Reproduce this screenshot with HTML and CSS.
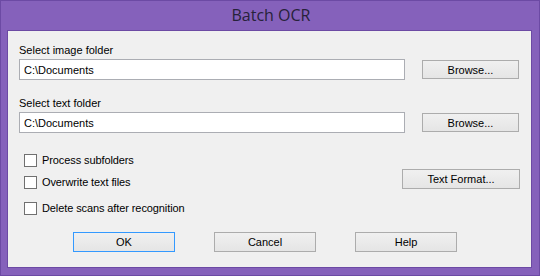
FILE: index.html
```html
<!DOCTYPE html>
<html>
<head>
    <meta charset="UTF-8">
    <title>Batch OCR</title>
    <link rel="stylesheet" href="styles.css">
</head>
<body>
    <div class="window">
        <div class="titlebar">Batch OCR</div>

        <div class="client">
            <div class="field first">
                <div class="field-label">Select image folder</div>
                <div class="field-row">
                    <input class="path" type="text" value="C:\Documents">
                    <button class="btn browse">Browse...</button>
                </div>
            </div>

            <div class="field">
                <div class="field-label">Select text folder</div>
                <div class="field-row">
                    <input class="path" type="text" value="C:\Documents">
                    <button class="btn browse">Browse...</button>
                </div>
            </div>

            <div class="options">
                <div class="checks">
                    <label class="check"><input type="checkbox"> Process subfolders</label>
                    <label class="check second"><input type="checkbox"> Overwrite text files</label>
                    <label class="check third"><input type="checkbox"> Delete scans after recognition</label>
                </div>
                <button class="btn format">Text Format...</button>
            </div>

            <div class="actions">
                <button class="btn action default">OK</button>
                <button class="btn action">Cancel</button>
                <button class="btn action">Help</button>
            </div>
        </div>
    </div>
</body>
</html>
```

FILE: styles.css
```css
html, body {
    margin: 0;
    padding: 0;
    width: 540px;
    height: 276px;
    overflow: hidden;
}
.window {
    box-sizing: border-box;
    width: 540px;
    height: 276px;
    background: #8561bb;
    border: 1px solid #6c4aa4;
    display: flex;
    flex-direction: column;
}
.titlebar {
    height: 29px;
    line-height: 29px;
    text-align: center;
    font-family: "Open Sans", "Noto Sans", sans-serif;
    font-size: 16px;
    color: #27223a;
    padding-left: 2px;
}
.client {
    box-sizing: border-box;
    margin: 0 7px 0 6px;
    height: 238px;
    background: #f0f0f0;
    border: 1px solid #6c4aa4;
    padding: 13px 11px 0 11px;
    font-family: "Liberation Sans", Arial, sans-serif;
    font-size: 11px;
    color: #000;
}
.field {
    margin-top: 17px;
}
.field.first {
    margin-top: 0;
}
.field-label {
    height: 13px;
    line-height: 13px;
    margin-bottom: 2px;
}
.field-row {
    display: flex;
    align-items: center;
}
.path {
    box-sizing: border-box;
    width: 386px;
    height: 21px;
    margin: 0;
    border: 1px solid #abadb3;
    background: #fff;
    padding: 0 4px;
    font-family: inherit;
    font-size: 11px;
    color: #000;
    outline: none;
}
.btn {
    box-sizing: border-box;
    margin: 0;
    padding: 0;
    border: 1px solid #acacac;
    background: linear-gradient(#f0f0f0, #e5e5e5);
    font-family: "Liberation Sans", Arial, sans-serif;
    font-size: 11px;
    color: #000;
}
.browse {
    width: 97px;
    height: 19px;
    margin-left: 17px;
}
.options {
    display: flex;
    justify-content: space-between;
    margin-top: 21px;
}
.checks {
    display: flex;
    flex-direction: column;
    padding-left: 5px;
}
.check {
    display: flex;
    align-items: center;
    height: 13px;
    line-height: 13px;
    letter-spacing: -0.1px;
}
.check.second {
    margin-top: 9px;
}
.check.third {
    margin-top: 13px;
}
.check input {
    appearance: none;
    -webkit-appearance: none;
    box-sizing: border-box;
    width: 13px;
    height: 13px;
    margin: 0 5px 0 0;
    border: 1px solid #707070;
    background: #fff;
}
.format {
    width: 118px;
    height: 20px;
    margin-top: 15px;
}
.actions {
    display: flex;
    gap: 39px;
    margin-top: 17px;
    padding-left: 54px;
}
.action {
    width: 102px;
    height: 20px;
}
.action.default {
    border-color: #3399ff;
}
```
